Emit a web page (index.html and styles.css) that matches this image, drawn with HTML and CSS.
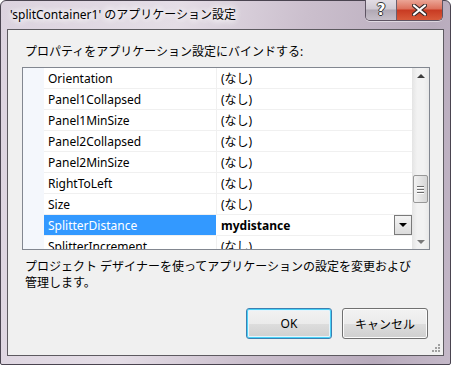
FILE: index.html
```html
<!DOCTYPE html>
<html lang="ja">
<head>
    <meta charset="UTF-8">
    <title>アプリケーション設定</title>
    <link rel="stylesheet" href="styles.css">
</head>
<body>
    <div class="window">
        <div class="titlebar">
            <div class="title">'splitContainer1' のアプリケーション設定</div>
            <div class="caption-btns">
                <div class="cap-btn help">?</div>
                <div class="cap-btn close">
                    <svg width="15" height="12" viewBox="0 0 15 12">
                        <path d="M2 1.5 L13 10.5 M13 1.5 L2 10.5" stroke="#3a2a2a" stroke-width="4.2" stroke-linecap="round"/>
                        <path d="M2 1.5 L13 10.5 M13 1.5 L2 10.5" stroke="#fff" stroke-width="2.2" stroke-linecap="round"/>
                    </svg>
                </div>
            </div>
        </div>
        <div class="client">
            <div class="label">プロパティをアプリケーション設定にバインドする:</div>
            <div class="grid">
                <div class="margin-col"></div>
                <div class="rows">
                    <div class="row"><div class="name">Orientation</div><div class="value">(なし)</div></div>
                    <div class="row"><div class="name">Panel1Collapsed</div><div class="value">(なし)</div></div>
                    <div class="row"><div class="name">Panel1MinSize</div><div class="value">(なし)</div></div>
                    <div class="row"><div class="name">Panel2Collapsed</div><div class="value">(なし)</div></div>
                    <div class="row"><div class="name">Panel2MinSize</div><div class="value">(なし)</div></div>
                    <div class="row"><div class="name">RightToLeft</div><div class="value">(なし)</div></div>
                    <div class="row"><div class="name">Size</div><div class="value">(なし)</div></div>
                    <div class="row selected">
                        <div class="name">SplitterDistance</div>
                        <div class="value bold">mydistance<span class="drop"><span class="tri"></span></span></div>
                    </div>
                    <div class="row"><div class="name">SplitterIncrement</div><div class="value">(なし)</div></div>
                </div>
                <div class="scrollbar">
                    <div class="arrow up"></div>
                    <div class="track">
                        <div class="thumb"><span></span><span></span><span></span></div>
                    </div>
                    <div class="arrow down"></div>
                </div>
            </div>
            <div class="desc">プロジェクト デザイナーを使ってアプリケーションの設定を変更および<br>管理します。</div>
            <div class="buttons">
                <div class="btn default">OK</div>
                <div class="btn">キャンセル</div>
            </div>
            <div class="grip">
                <svg width="8" height="8" viewBox="0 0 8 8" fill="#a0a0a0">
                    <rect x="6" y="0" width="2" height="2"/>
                    <rect x="3" y="3" width="2" height="2"/><rect x="6" y="3" width="2" height="2"/>
                    <rect x="0" y="6" width="2" height="2"/><rect x="3" y="6" width="2" height="2"/><rect x="6" y="6" width="2" height="2"/>
                </svg>
            </div>
        </div>
    </div>
</body>
</html>
```

FILE: styles.css
```css
*{
    margin:0;
    padding:0;
    box-sizing:border-box;
}
body{
    width:451px;
    height:365px;
    overflow:hidden;
    font-family:"Noto Sans","Noto Sans CJK JP",sans-serif;
    font-size:12px;
    color:#000;
    background:#fff;
}
.window{
    width:451px;
    height:365px;
    border:1px solid #4a4450;
    border-radius:6px 6px 2px 2px;
    background:linear-gradient(100deg,#dcd3df 0%,#e4dde6 35%,#cbbfcd 60%,#b8abbc 85%,#c4b8c8 100%);
    padding:0 6px 8px 6px;
    display:flex;
    flex-direction:column;
}
.titlebar{
    height:28px;
    display:flex;
    justify-content:space-between;
    align-items:flex-start;
}
.title{
    margin:6px 0 0 3px;
    line-height:16px;
    text-shadow:0 0 6px #fff,0 0 8px #fff,0 0 10px #fff;
}
.caption-btns{
    display:flex;
    margin-top:-1px;
    margin-right:1px;
    border:1px solid #5e5463;
    border-top:none;
    border-radius:0 0 5px 5px;
    overflow:hidden;
    box-shadow:0 1px 0 rgba(255,255,255,0.5);
}
.cap-btn{
    height:20px;
    display:flex;
    align-items:center;
    justify-content:center;
}
.help{
    width:31px;
    background:linear-gradient(#e2dde4 0%,#d0cad3 45%,#b0a8b4 50%,#c6bfc9 100%);
    border-right:1px solid #6a5f6e;
    color:#fff;
    font-family:"DejaVu Sans",sans-serif;
    font-weight:bold;
    font-size:15px;
    text-shadow:1px 0 0 #333,-1px 0 0 #333,0 1px 0 #333,0 -1px 0 #333;
}
.close{
    width:45px;
    background:linear-gradient(#eba596 0%,#dc705b 45%,#c83a22 50%,#d85a3a 100%);
}
.client{
    flex:1;
    border:1px solid #5d5a60;
    background:#f0f0f0;
    padding-left:14px;
    position:relative;
}
.label{
    margin:14px 0 0 3px;
    line-height:16px;
}
.grid{
    margin-top:7px;
    width:408px;
    height:183px;
    border:1px solid #828790;
    background:#fff;
    display:flex;
    overflow:hidden;
}
.margin-col{
    width:21px;
    background:#f4f7fc;
    flex:none;
}
.rows{
    width:368px;
    flex:none;
}
.row{
    display:flex;
    height:21px;
    line-height:21px;
}
.name{
    width:173px;
    padding-left:4px;
    border-right:1px solid #f0f0f0;
    border-bottom:1px solid #f0f0f0;
    white-space:nowrap;
}
.value{
    flex:1;
    padding-left:4px;
    border-bottom:1px solid #f0f0f0;
    position:relative;
}
.selected .name{
    background:#3399ff;
    color:#fff;
    border-right-color:#fff;
}
.bold{
    font-weight:bold;
}
.drop{
    position:absolute;
    right:0;
    top:0;
    width:18px;
    height:20px;
    border:1px solid #7a7a7a;
    background:linear-gradient(#f4f4f4,#dcdcdc);
    display:flex;
    align-items:center;
    justify-content:center;
}
.tri{
    width:0;
    height:0;
    border-left:4px solid transparent;
    border-right:4px solid transparent;
    border-top:4px solid #000;
}
.scrollbar{
    width:17px;
    flex:none;
    background:linear-gradient(90deg,#e4e4e4,#f2f2f2 30%,#f2f2f2 70%,#e8e8e8);
    display:flex;
    flex-direction:column;
}
.arrow{
    height:17px;
    display:flex;
    justify-content:center;
    align-items:center;
}
.arrow::after{
    content:"";
    width:0;
    height:0;
    border-left:4px solid transparent;
    border-right:4px solid transparent;
}
.up::after{
    border-bottom:4px solid #3e3e3e;
    margin-top:-2px;
}
.down::after{
    border-top:4px solid #7a7a7a;
    margin-top:3px;
}
.track{
    flex:1;
    padding-top:90px;
}
.thumb{
    margin-left:1px;
    width:15px;
    height:28px;
    border:1px solid #979797;
    border-radius:2px;
    background:linear-gradient(90deg,#f2f2f2,#e4e4e4 50%,#d6d6d6);
    display:flex;
    flex-direction:column;
    align-items:center;
    justify-content:center;
    gap:2px;
}
.thumb span{
    width:7px;
    height:1px;
    background:#6a6a6a;
    box-shadow:0 1px 0 #fff;
}
.desc{
    margin:9px 0 0 3px;
    line-height:16px;
}
.buttons{
    display:flex;
    justify-content:flex-end;
    gap:10px;
    margin:17px 15px 0 0;
}
.btn{
    width:86px;
    height:31px;
    border:1px solid #707070;
    border-radius:3px;
    background:linear-gradient(#f2f2f2 0%,#ebebeb 50%,#dddddd 51%,#cfcfcf 100%);
    display:flex;
    align-items:center;
    justify-content:center;
    box-shadow:inset 0 0 0 1px #fcfcfc;
}
.btn.default{
    border-color:#3c7fb1;
    box-shadow:inset 0 0 0 1px #48d2f8,inset 0 0 0 2px #e5f4fc;
}
.grip{
    position:absolute;
    right:3px;
    bottom:3px;
    line-height:0;
}
```
